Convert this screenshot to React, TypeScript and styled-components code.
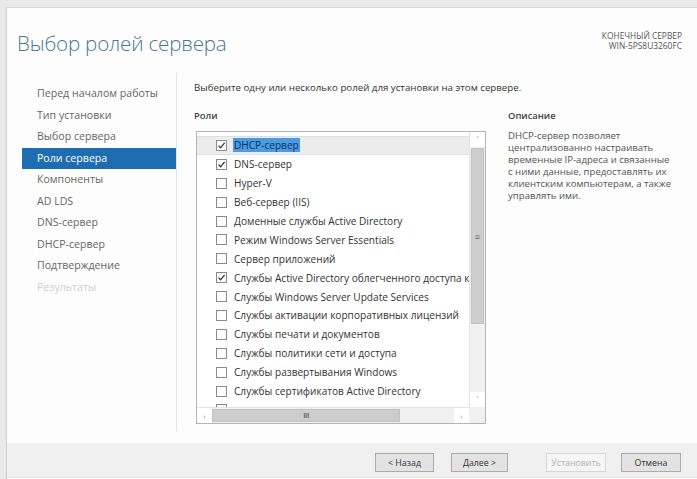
import React from "react";
import styled, { createGlobalStyle } from "styled-components";

const GlobalStyle = createGlobalStyle`
  html, body {
    margin: 0;
    padding: 0;
    background: #e9e9e9;
    font-family: "Open Sans", "Noto Sans", sans-serif;
  }
  * { box-sizing: border-box; }
`;

const Frame = styled.div`
  width: 697px;
  height: 479px;
  padding: 7px 0 0 6px;
  overflow: hidden;
`;

const Window = styled.div`
  height: 472px;
  background: #fdfdfd;
  border-top: 1px solid #d6d6d6;
  border-left: 1px solid #cfcfcf;
  display: flex;
  flex-direction: column;
`;

const Header = styled.div`
  height: 65px;
  display: flex;
  justify-content: space-between;
  align-items: flex-start;
  padding: 20px 15px 0 10px;
`;

const Title = styled.h1`
  margin: 0;
  font-size: 20.6px;
  font-weight: 300;
  line-height: 30px;
  color: #4a7892;
  letter-spacing: -0.2px;
`;

const ServerInfo = styled.div`
  padding-top: 3px;
  text-align: right;
  font-size: 8.4px;
  line-height: 10px;
  color: #555;
`;

const Body = styled.div`
  flex: 1;
  display: flex;
  min-height: 0;
`;

const Nav = styled.nav`
  width: 169px;
  padding: 10px 0 0 15px;
  display: flex;
  flex-direction: column;
`;

const NavItem = styled.div<{ $active?: boolean; $disabled?: boolean }>`
  height: 21.5px;
  line-height: 21.5px;
  padding-left: 15px;
  font-size: 10.6px;
  white-space: nowrap;
  color: ${(p) => (p.$active ? "#ffffff" : p.$disabled ? "#cfcfcf" : "#666")};
  background: ${(p) => (p.$active ? "#1e6db2" : "transparent")};
`;

const Divider = styled.div`
  width: 1px;
  margin-bottom: 12px;
  background: #e2e2e2;
`;

const Content = styled.div`
  flex: 1;
  padding: 8px 0 0 17px;
  display: flex;
  flex-direction: column;
`;

const Intro = styled.div`
  font-size: 9.7px;
  line-height: 14px;
  color: #333;
  white-space: nowrap;
`;

const Columns = styled.div`
  display: flex;
  gap: 22px;
  margin-top: 14px;
`;

const RolesColumn = styled.div`
  display: flex;
  flex-direction: column;
`;

const Caption = styled.div`
  font-size: 9.4px;
  line-height: 14px;
  font-weight: 600;
  color: #444;
`;

const ListBox = styled.div`
  margin: 8px 0 0 2px;
  width: 290px;
  height: 293px;
  border: 1px solid #b4b4b4;
  background: #fff;
  display: grid;
  grid-template-columns: 1fr 16px;
  grid-template-rows: 1fr 16px;
  overflow: hidden;
`;

const Rows = styled.div`
  padding-top: 4px;
  overflow: hidden;
  min-width: 0;
  min-height: 0;
`;

const Row = styled.div<{ $current?: boolean }>`
  height: 18.9px;
  display: flex;
  align-items: center;
  gap: 6px;
  padding-left: 19px;
  white-space: nowrap;
  font-size: 10.1px;
  color: #333;
  background: ${(p) => (p.$current ? "#ececec" : "transparent")};
  border-top: 1px solid ${(p) => (p.$current ? "#e0e0e0" : "transparent")};
  border-bottom: 1px solid ${(p) => (p.$current ? "#e0e0e0" : "transparent")};
`;

const Check = styled.span`
  flex: none;
  width: 11px;
  height: 11px;
  border: 1px solid #8a8a8a;
  background: #fff;
  display: flex;
  align-items: center;
  justify-content: center;
`;

const Label = styled.span<{ $selected?: boolean }>`
  padding: 0 1px;
  color: ${(p) => (p.$selected ? "#0d2f66" : "#333")};
  background: ${(p) => (p.$selected ? "#4b9be0" : "transparent")};
`;

const VScroll = styled.div`
  background: #f0f0f0;
  border-left: 1px solid #e4e4e4;
  display: flex;
  flex-direction: column;
  align-items: stretch;
`;

const HScroll = styled.div`
  background: #f0f0f0;
  border-top: 1px solid #e4e4e4;
  display: flex;
  align-items: stretch;
`;

const Track = styled.div`
  flex: 1;
`;

const Arrow = styled.div`
  flex: none;
  width: 15px;
  height: 15px;
  display: flex;
  align-items: center;
  justify-content: center;
  color: #888;
  font-size: 8px;
  line-height: 1;
  background: #fff;
`;

const Thumb = styled.div<{ $vertical?: boolean }>`
  background: #cdcdcd;
  border: 1px solid #c2c2c2;
  display: flex;
  align-items: center;
  justify-content: center;
  color: #6a6a6a;
  line-height: 1;
  ${(p) =>
    p.$vertical
      ? "height: 176px; margin: 1px 1px 0; font-size: 9px;"
      : "width: 188px; margin: 1px 0 1px 0; font-size: 7px; font-weight: 700; letter-spacing: -0.5px;"}
`;

const Corner = styled.div`
  background: #f0f0f0;
`;

const DescColumn = styled.div`
  width: 182px;
  display: flex;
  flex-direction: column;
`;

const DescText = styled.div`
  margin-top: 7px;
  font-size: 9.6px;
  line-height: 12px;
  color: #555;
  white-space: nowrap;
`;

const Footer = styled.div`
  height: 35px;
  margin-bottom: 1px;
  background: #f0f0f0;
  border-bottom: 1px solid #ece4e0;
  display: flex;
  justify-content: flex-end;
  align-items: flex-start;
  padding: 10px 16px 0 0;
  gap: 15px;
`;

const Button = styled.button<{ $width: number; $gapBefore?: number; $disabled?: boolean }>`
  width: ${(p) => p.$width}px;
  height: 19px;
  margin-left: ${(p) => p.$gapBefore ?? 0}px;
  padding: 0;
  font-family: inherit;
  font-size: 8.8px;
  color: ${(p) => (p.$disabled ? "#b0b0b0" : "#333")};
  background: ${(p) => (p.$disabled ? "#f6f6f6" : "#e3e3e3")};
  border: 1px solid ${(p) => (p.$disabled ? "#d6d6d6" : "#acacac")};
`;

function Tick() {
  return (
    <svg width="9" height="9" viewBox="0 0 9 9">
      <path d="M1.5 4.6 L3.6 6.8 L7.6 1.8" fill="none" stroke="#333" strokeWidth="1.3" />
    </svg>
  );
}

const navItems = [
  "Перед началом работы",
  "Тип установки",
  "Выбор сервера",
  "Роли сервера",
  "Компоненты",
  "AD LDS",
  "DNS-сервер",
  "DHCP-сервер",
  "Подтверждение",
  "Результаты",
];

const roles: { name: string; checked?: boolean }[] = [
  { name: "DHCP-сервер", checked: true },
  { name: "DNS-сервер", checked: true },
  { name: "Hyper-V" },
  { name: "Веб-сервер (IIS)" },
  { name: "Доменные службы Active Directory" },
  { name: "Режим Windows Server Essentials" },
  { name: "Сервер приложений" },
  { name: "Службы Active Directory облегченного доступа к каталогам", checked: true },
  { name: "Службы Windows Server Update Services" },
  { name: "Службы активации корпоративных лицензий" },
  { name: "Службы печати и документов" },
  { name: "Службы политики сети и доступа" },
  { name: "Службы развертывания Windows" },
  { name: "Службы сертификатов Active Directory" },
];

const description = [
  "DHCP-сервер позволяет",
  "централизованно настраивать",
  "временные IP-адреса и связанные",
  "с ними данные, предоставлять их",
  "клиентским компьютерам, а также",
  "управлять ими.",
];

export default function App() {
  return (
    <>
      <GlobalStyle />
      <Frame>
        <Window>
          <Header>
            <Title>Выбор ролей сервера</Title>
            <ServerInfo>
              <div>КОНЕЧНЫЙ СЕРВЕР</div>
              <div>WIN-5PS8U3260FC</div>
            </ServerInfo>
          </Header>
          <Body>
            <Nav>
              {navItems.map((item, i) => (
                <NavItem key={item} $active={i === 3} $disabled={i === navItems.length - 1}>
                  {item}
                </NavItem>
              ))}
            </Nav>
            <Divider />
            <Content>
              <Intro>Выберите одну или несколько ролей для установки на этом сервере.</Intro>
              <Columns>
                <RolesColumn>
                  <Caption>Роли</Caption>
                  <ListBox>
                    <Rows>
                      {roles.map((r, i) => (
                        <Row key={r.name} $current={i === 0}>
                          <Check>{r.checked && <Tick />}</Check>
                          <Label $selected={i === 0}>{r.name}</Label>
                        </Row>
                      ))}
                      <Row>
                        <Check />
                      </Row>
                    </Rows>
                    <VScroll>
                      <Arrow>˄</Arrow>
                      <Thumb $vertical>≡</Thumb>
                      <Track />
                      <Arrow>˅</Arrow>
                    </VScroll>
                    <HScroll>
                      <Arrow>‹</Arrow>
                      <Thumb>III</Thumb>
                      <Track />
                      <Arrow>›</Arrow>
                    </HScroll>
                    <Corner />
                  </ListBox>
                </RolesColumn>
                <DescColumn>
                  <Caption>Описание</Caption>
                  <DescText>
                    {description.map((line) => (
                      <div key={line}>{line}</div>
                    ))}
                  </DescText>
                </DescColumn>
              </Columns>
            </Content>
          </Body>
          <Footer>
            <Button $width={59}>&lt; Назад</Button>
            <Button $width={57} $gapBefore={2}>Далее &gt;</Button>
            <Button $width={60} $gapBefore={23} $disabled>Установить</Button>
            <Button $width={60}>Отмена</Button>
          </Footer>
        </Window>
      </Frame>
    </>
  );
}
